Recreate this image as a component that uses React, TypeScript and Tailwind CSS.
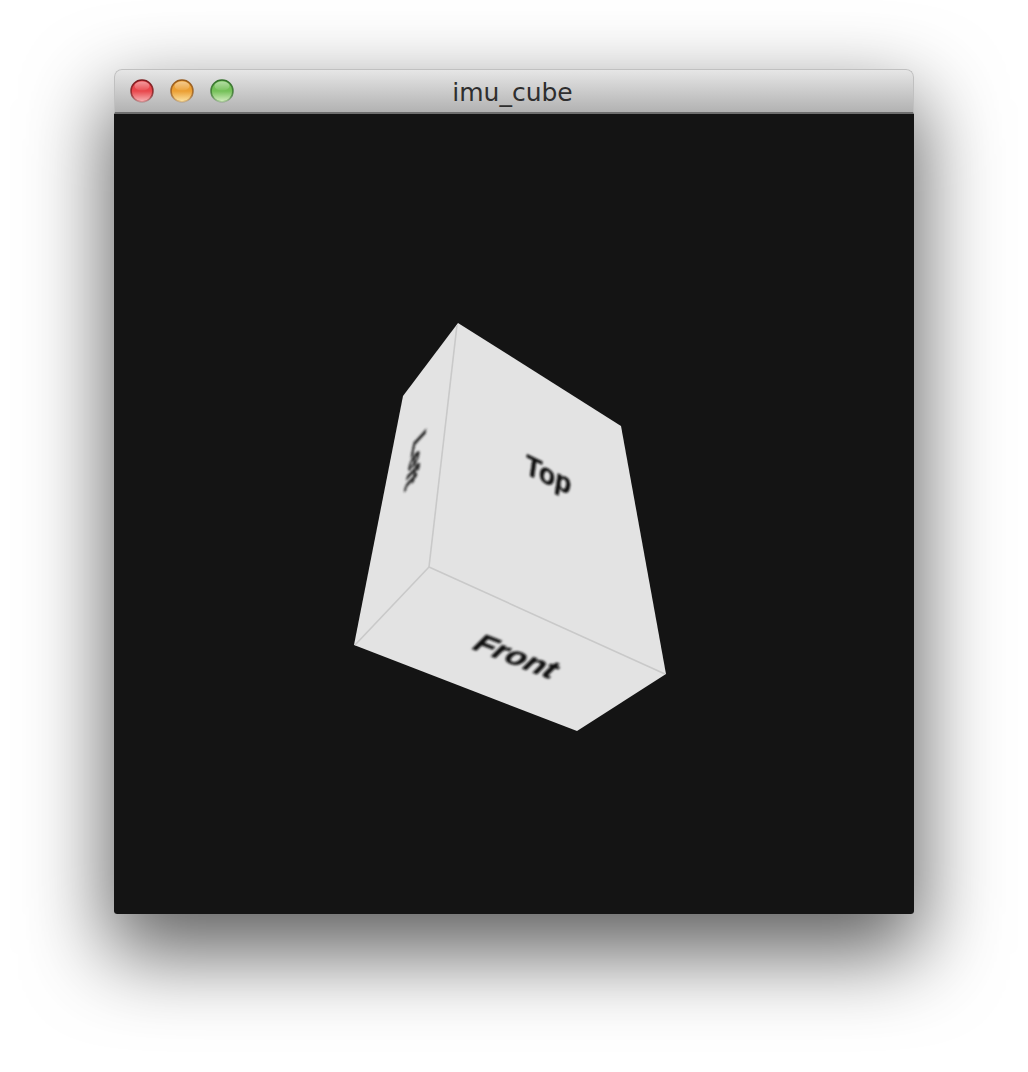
export default function App() {
  return (
    <div className="h-[1072px] w-[1028px] overflow-hidden bg-white pl-[114px] pt-[69px]">
      <div className="flex w-[800px] flex-col rounded-t-[8px] rounded-b-[3px] shadow-[0_34px_82px_6px_rgba(0,0,0,0.62)]">
        <div className="relative flex h-[45px] items-center gap-[14px] rounded-t-[8px] border-t border-x border-[#c0c0c0] border-b-2 border-b-[#6e6e6e] bg-gradient-to-b from-[#e6e6e6] to-[#b2b2b2] pl-[14px]">
          <Light edge="#7c1a1d" from="#e8474c" to="#f8b8ba" />
          <Light edge="#96591a" from="#eb9f33" to="#fde6a8" />
          <Light edge="#33702a" from="#74c058" to="#d8efc4" />
          <div className="absolute inset-0 flex items-center justify-center pt-[3px] pr-[3px] font-['DejaVu_Sans',sans-serif] text-[25px] text-[#2e2e2e]">
            imu_cube
          </div>
        </div>
        <div className="h-[800px] w-[800px] rounded-b-[3px] bg-[#141414]">
          <svg viewBox="114 114 800 800" className="block h-full w-full">
            <defs>
              <filter id="soft">
                <feGaussianBlur stdDeviation="0.8" />
              </filter>
            </defs>
            <polygon points="458,323 621,426 666,674 577,731 354,645 403,396" fill="#e3e3e3" />
            <g stroke="#c9c9c9" strokeWidth="1.6" fill="none">
              <line x1="457" y1="325" x2="429" y2="567" />
              <line x1="429" y1="567" x2="665" y2="674" />
              <line x1="429" y1="567" x2="355" y2="645" />
            </g>
            <g filter="url(#soft)" fontFamily="'Liberation Sans', sans-serif" fontWeight="700" fill="#101010" stroke="#101010" strokeWidth="0.4">
              <text transform="matrix(0.9 0.43 -0.14 0.95 524 473)" fontSize="29">Top</text>
              <text transform="matrix(1 0.39 -0.68 0.68 470 648)" fontSize="31">Front</text>
              <text transform="matrix(-0.18 0.93 -0.6 0.65 414 441)" fontSize="30" fill="#2a2a2a" stroke="#2a2a2a" strokeWidth="1.4">Left</text>
            </g>
          </svg>
        </div>
      </div>
    </div>
  );
}

function Light({ edge, from, to }: { edge: string; from: string; to: string }) {
  return (
    <svg width="26" height="26" viewBox="0 0 26 26" className="shrink-0">
      <defs>
        <linearGradient id={`g${edge}`} x1="0" y1="0" x2="0" y2="1">
          <stop offset="0" stopColor={from} />
          <stop offset="0.5" stopColor={from} />
          <stop offset="1" stopColor={to} />
        </linearGradient>
        <linearGradient id={`s${edge}`} x1="0" y1="0" x2="0" y2="1">
          <stop offset="0" stopColor={edge} />
          <stop offset="0.7" stopColor={edge} stopOpacity="0.7" />
          <stop offset="1" stopColor={edge} stopOpacity="0.25" />
        </linearGradient>
        <linearGradient id={`h${edge}`} x1="0" y1="0" x2="0" y2="1">
          <stop offset="0" stopColor="#ffffff" stopOpacity="0.45" />
          <stop offset="1" stopColor="#ffffff" stopOpacity="0.05" />
        </linearGradient>
      </defs>
      <circle cx="13" cy="13" r="11" fill={`url(#g${edge})`} stroke={`url(#s${edge})`} strokeWidth="1.6" />
      <ellipse cx="13" cy="8" rx="7.5" ry="4.6" fill={`url(#h${edge})`} />
    </svg>
  );
}
